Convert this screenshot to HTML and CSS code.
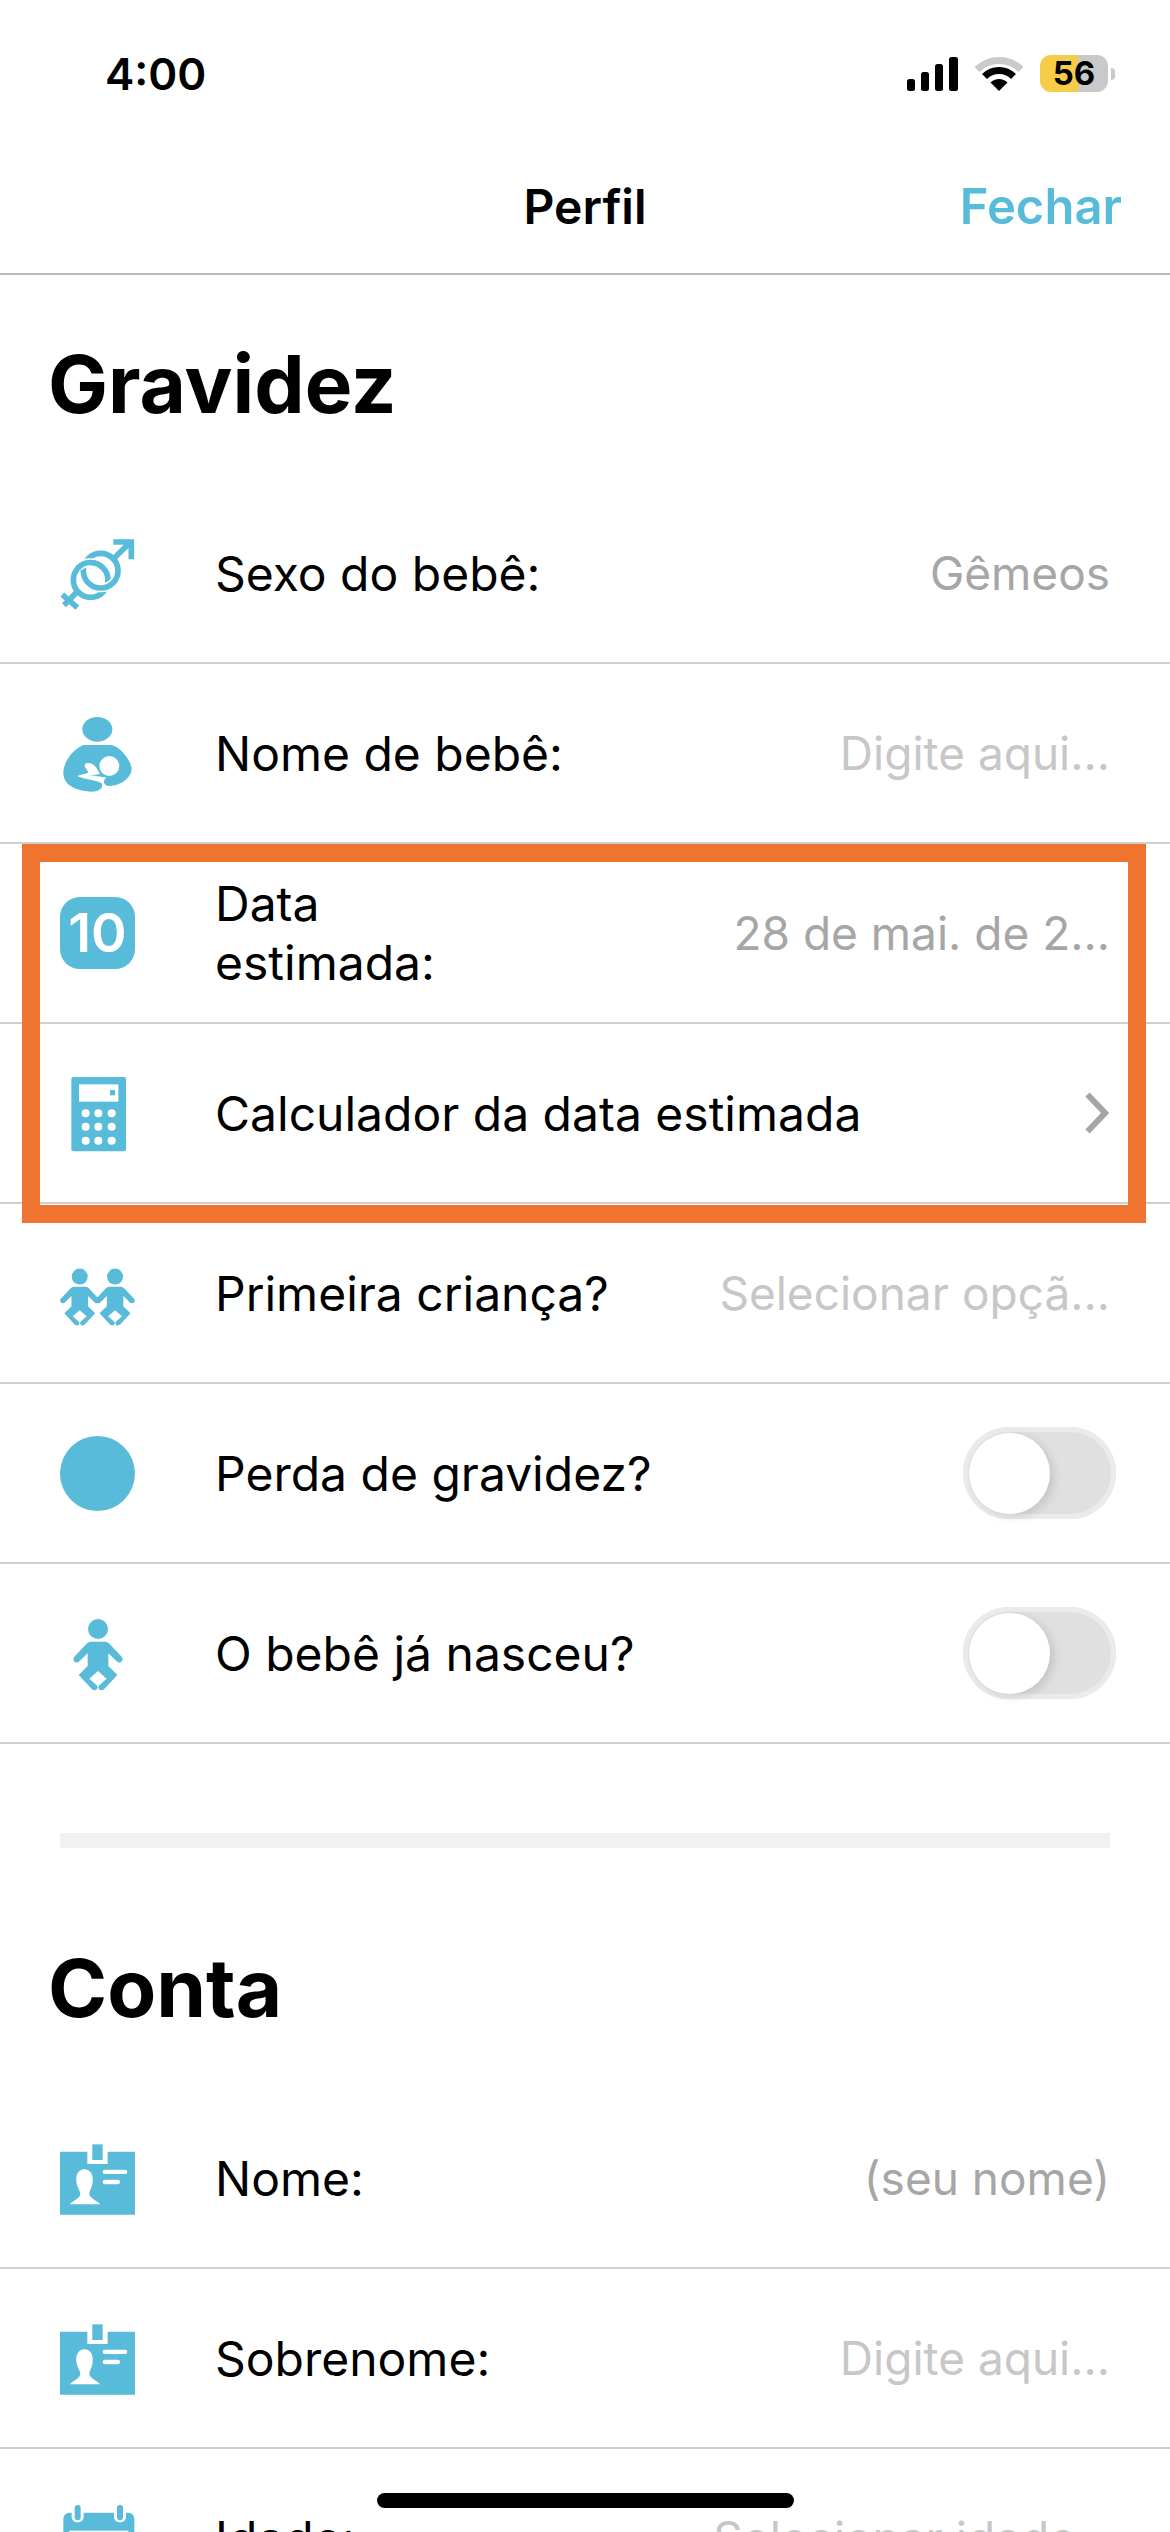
FILE: index.html
```html
<!DOCTYPE html>
<html lang="pt-BR">
<head>
  <meta charset="UTF-8" />
  <title>Perfil</title>
  <meta name="viewport" content="width=device-width, initial-scale=1" />
  <link rel="stylesheet" href="styles.css">
</head>
<body>
  <div class="status">
    <span class="time">4:00</span>
    <div class="status-icons">
      <svg class="signal" viewBox="0 0 51 34">
        <rect x="0" y="22" width="8" height="12" rx="2.5" />
        <rect x="14" y="15" width="8" height="19" rx="2.5" />
        <rect x="28" y="7" width="8" height="27" rx="2.5" />
        <rect x="42" y="0" width="9" height="34" rx="2.5" />
      </svg>
      <svg class="wifi" viewBox="0 0 48 35">
        <path d="M2 13.5A31.5 31.5 0 0 1 46 13.5" fill="none" stroke="#cbcbcb" stroke-width="7" />
        <path d="M9.5 20.5A20.5 20.5 0 0 1 38.5 20.5" fill="none" stroke="#000" stroke-width="7" />
        <path d="M24 35L15.5 26.5A12 12 0 0 1 32.5 26.5Z" />
      </svg>
      <div class="battery">56</div>
      <div class="battery-nub"></div>
    </div>
  </div>

  <header class="nav">
    <h2>Perfil</h2>
    <a class="close">Fechar</a>
  </header>

  <section>
    <h1>Gravidez</h1>
    <div class="row">
      <svg class="icon" viewBox="180 69 228 300">
        <g fill="none" stroke="#57bbd9" stroke-width="17">
          <circle cx="272" cy="240" r="52" />
          <path d="M230 277L192 316M187 284L232 323" />
          <circle cx="302" cy="212" r="52" stroke="#fff" stroke-width="26" />
          <circle cx="302" cy="212" r="52" />
          <path d="M342 175L392 126M340 126H394V178" />
          <path d="M236.3 201A52 52 0 0 1 278.5 188.4" stroke="#fff" stroke-width="26" />
          <path d="M232 206A52 52 0 0 1 283 189" />
        </g>
      </svg>
      <span class="label">Sexo do bebê:</span>
      <span class="value">Gêmeos</span>
    </div>
    <div class="row">
      <svg class="icon" viewBox="180 609 228 300">
        <ellipse cx="292" cy="688" rx="45" ry="37" fill="#57bbd9" />
        <path d="M250 735H335C360 742 390 775 395 805C395 835 360 858 328 858C312 858 305 840 320 833C300 830 265 822 232 828C250 838 285 838 305 850C312 865 295 875 275 875C240 875 190 860 190 820C190 780 225 745 250 735Z" fill="#57bbd9" />
        <circle cx="328" cy="798" r="30" fill="#fff" />
        <path d="M232 828L265 818C262 808 250 800 255 792C265 785 280 790 288 802L300 822C280 826 250 830 232 828Z" fill="#fff" />
      </svg>
      <span class="label">Nome de bebê:</span>
      <span class="value hint">Digite aqui...</span>
    </div>
    <div class="row">
      <div class="icon-slot"><div class="day-icon">10</div></div>
      <span class="label">Data<br>estimada:</span>
      <span class="value">28 de mai. de 2...</span>
    </div>
    <div class="row">
      <svg class="icon" viewBox="180 669 228 300">
        <rect x="214" y="711" width="164" height="223" rx="6" fill="#57bbd9" />
        <rect x="237" y="733" width="118" height="52" fill="#fff" />
        <rect x="330" y="750" width="15" height="16" fill="#57bbd9" />
        <g fill="#fff">
          <circle cx="257" cy="820" r="12" /><circle cx="295" cy="820" r="12" /><circle cx="335" cy="820" r="12" />
          <circle cx="257" cy="860" r="12" /><circle cx="295" cy="860" r="12" /><circle cx="335" cy="860" r="12" />
          <circle cx="257" cy="902" r="12" /><circle cx="295" cy="902" r="12" /><circle cx="335" cy="902" r="12" />
        </g>
      </svg>
      <span class="label">Calculador da data estimada</span>
      <svg class="chevron" viewBox="0 0 24 42">
        <path d="M2.5 2.5L20 21L2.5 39.5" fill="none" stroke="#a5a5a5" stroke-width="6" />
      </svg>
    </div>
    <div class="row">
      <svg class="icon" viewBox="180 129 228 300">
        <g transform="translate(100 136) scale(.8)">
          <circle cx="174" cy="117" r="30" fill="#57bbd9" />
          <path d="M152 155H196C202 155 205 158 209 162L245 200C254 210 240 224 230 214L205 190V228L232 255L192 298C180 306 170 294 178 286L200 266L174 243L148 266L170 286C178 294 168 306 156 298L116 255L143 228V190L118 214C108 224 94 210 103 200L139 162C143 158 146 155 152 155Z" fill="#57bbd9" />
        </g>
        <g transform="translate(206 136) scale(.8)">
          <circle cx="174" cy="117" r="30" fill="#57bbd9" />
          <path d="M152 155H196C202 155 205 158 209 162L245 200C254 210 240 224 230 214L205 190V228L232 255L192 298C180 306 170 294 178 286L200 266L174 243L148 266L170 286C178 294 168 306 156 298L116 255L143 228V190L118 214C108 224 94 210 103 200L139 162C143 158 146 155 152 155Z" fill="#57bbd9" />
        </g>
      </svg>
      <span class="label">Primeira criança?</span>
      <span class="value hint">Selecionar opçã...</span>
    </div>
    <div class="row">
      <div class="icon-slot"><div class="dot-icon"></div></div>
      <span class="label">Perda de gravidez?</span>
      <div class="toggle"><div class="knob"></div></div>
    </div>
    <div class="row">
      <svg class="icon" viewBox="60 39 228 300">
        <circle cx="174" cy="117" r="30" fill="#57bbd9" />
        <path d="M152 155H196C202 155 205 158 209 162L245 200C254 210 240 224 230 214L205 190V228L232 255L192 298C180 306 170 294 178 286L200 266L174 243L148 266L170 286C178 294 168 306 156 298L116 255L143 228V190L118 214C108 224 94 210 103 200L139 162C143 158 146 155 152 155Z" fill="#57bbd9" />
      </svg>
      <span class="label">O bebê já nasceu?</span>
      <div class="toggle"><div class="knob"></div></div>
    </div>
  </section>

  <div class="divider"></div>

  <section>
    <h1 class="account">Conta</h1>
    <div class="row">
      <svg class="icon" viewBox="180 84 228 300">
        <path d="M180 155H262V192H323V155H405V344H180Z" fill="#57bbd9" />
        <rect x="277" y="133" width="31" height="47" fill="#57bbd9" />
        <g fill="#fff">
          <path d="M253 208C272 208 280 225 278 245C277 262 268 272 268 282C270 296 292 302 300 313H210C218 302 240 296 241 282C241 272 231 262 229 245C227 225 235 208 253 208Z" />
          <rect x="308" y="209" width="74" height="13" rx="6.5" />
          <rect x="308" y="239" width="52" height="14" rx="7" />
        </g>
      </svg>
      <span class="label">Nome:</span>
      <span class="value">(seu nome)</span>
    </div>
    <div class="row">
      <svg class="icon" viewBox="180 84 228 300">
        <path d="M180 155H262V192H323V155H405V344H180Z" fill="#57bbd9" />
        <rect x="277" y="133" width="31" height="47" fill="#57bbd9" />
        <g fill="#fff">
          <path d="M253 208C272 208 280 225 278 245C277 262 268 272 268 282C270 296 292 302 300 313H210C218 302 240 296 241 282C241 272 231 262 229 245C227 225 235 208 253 208Z" />
          <rect x="308" y="209" width="74" height="13" rx="6.5" />
          <rect x="308" y="239" width="52" height="14" rx="7" />
        </g>
      </svg>
      <span class="label">Sobrenome:</span>
      <span class="value hint">Digite aqui...</span>
    </div>
    <div class="row">
      <svg class="icon" viewBox="60 24 228 300">
        <rect x="70" y="98" width="213" height="200" rx="18" fill="#57bbd9" />
        <rect x="88" y="152" width="177" height="130" fill="#fff" />
        <path d="M95 92V110C95 132 131 132 131 110V92M222 92V110C222 132 258 132 258 110V92" fill="#fff" />
        <rect x="104" y="75" width="18" height="46" rx="9" fill="#57bbd9" />
        <rect x="231" y="75" width="18" height="46" rx="9" fill="#57bbd9" />
      </svg>
      <span class="label">Idade:</span>
      <span class="value hint inset">Selecionar idade</span>
    </div>
  </section>

  <div class="highlight"></div>
  <div class="home-bar"></div>
</body>
</html>
```

FILE: styles.css
```css
:root {
  --blue: #57bbd9;
  --line: #cfcfcf;
  --grey: #a6a6a6;
  --hint: #c7c7c9;
  --orange: #ee7430;
}
html, body {
  margin: 0;
  padding: 0;
}
body {
  position: relative;
  width: 1170px;
  height: 2532px;
  overflow: hidden;
  background: #fff;
  color: #000;
  font-family: Inter, "Liberation Sans", sans-serif;
}
.status {
  height: 107px;
  padding: 40px 55px 0 105px;
  box-sizing: border-box;
  display: flex;
  justify-content: space-between;
  align-items: center;
}
.time {
  font-size: 44px;
  font-weight: 600;
}
.status-icons {
  display: flex;
  align-items: center;
}
.signal {
  width: 51px;
  height: 34px;
  margin-right: 17px;
}
.wifi {
  width: 48px;
  height: 35px;
  margin-right: 17px;
}
.battery {
  width: 68px;
  height: 37px;
  border-radius: 11px;
  background: linear-gradient(90deg, #f5cd48 56%, #c9c9c9 56%);
  font-size: 33px;
  font-weight: 700;
  line-height: 37px;
  text-align: center;
}
.battery-nub {
  width: 4px;
  height: 12px;
  margin-left: 3px;
  border-radius: 0 6px 6px 0;
  background: #c9c9c9;
}
.nav {
  height: 168px;
  padding-top: 32px;
  box-sizing: border-box;
  border-bottom: 2px solid #b9b9b9;
  display: flex;
  justify-content: center;
  align-items: center;
  position: relative;
}
.nav h2 {
  margin: 0;
  font-size: 48px;
  font-weight: 600;
}
.close {
  position: absolute;
  right: 48px;
  font-size: 49px;
  font-weight: 600;
  color: var(--blue);
}
h1 {
  margin: 0;
  padding: 59px 0 50px 48px;
  font-size: 80px;
  line-height: 100px;
  font-weight: 700;
}
h1.account {
  padding-bottom: 51px;
}
.row {
  height: 180px;
  box-sizing: border-box;
  border-bottom: 2px solid var(--line);
  padding: 0 60px;
  display: flex;
  align-items: center;
}
.icon {
  width: 76px;
  height: 100px;
  flex: none;
}
.icon-slot {
  width: 76px;
  flex: none;
}
.day-icon {
  width: 75px;
  height: 72px;
  border-radius: 20px;
  background: var(--blue);
  color: #fff;
  font-size: 54px;
  font-weight: 600;
  line-height: 72px;
  text-align: center;
}
.dot-icon {
  width: 75px;
  height: 75px;
  border-radius: 50%;
  background: var(--blue);
}
.label {
  margin-left: 79px;
  flex: 1;
  font-size: 48px;
  line-height: 59px;
}
.value {
  font-size: 46px;
  color: var(--grey);
}
.value.hint {
  color: var(--hint);
}
.value.inset {
  margin-right: 34px;
}
.chevron {
  width: 24px;
  height: 42px;
  margin-right: 1px;
}
.toggle {
  width: 153px;
  height: 92px;
  margin-right: -6px;
  box-sizing: border-box;
  padding: 6px;
  border-radius: 46px;
  background: #e0e0e0;
  box-shadow: inset 0 0 0 5px #ebebeb;
}
.knob {
  width: 81px;
  height: 81px;
  border-radius: 50%;
  background: #fff;
  box-shadow: 4px 3px 10px rgba(0,0,0,0.12);
}
.divider {
  height: 15px;
  margin: 89px 60px 31px;
  background: #f1f1f1;
}
.highlight {
  position: absolute;
  left: 22px;
  top: 844px;
  width: 1124px;
  height: 379px;
  box-sizing: border-box;
  border: 18px solid var(--orange);
}
.home-bar {
  position: absolute;
  left: 377px;
  top: 2493px;
  width: 417px;
  height: 15px;
  border-radius: 8px;
  background: #000;
}
```
